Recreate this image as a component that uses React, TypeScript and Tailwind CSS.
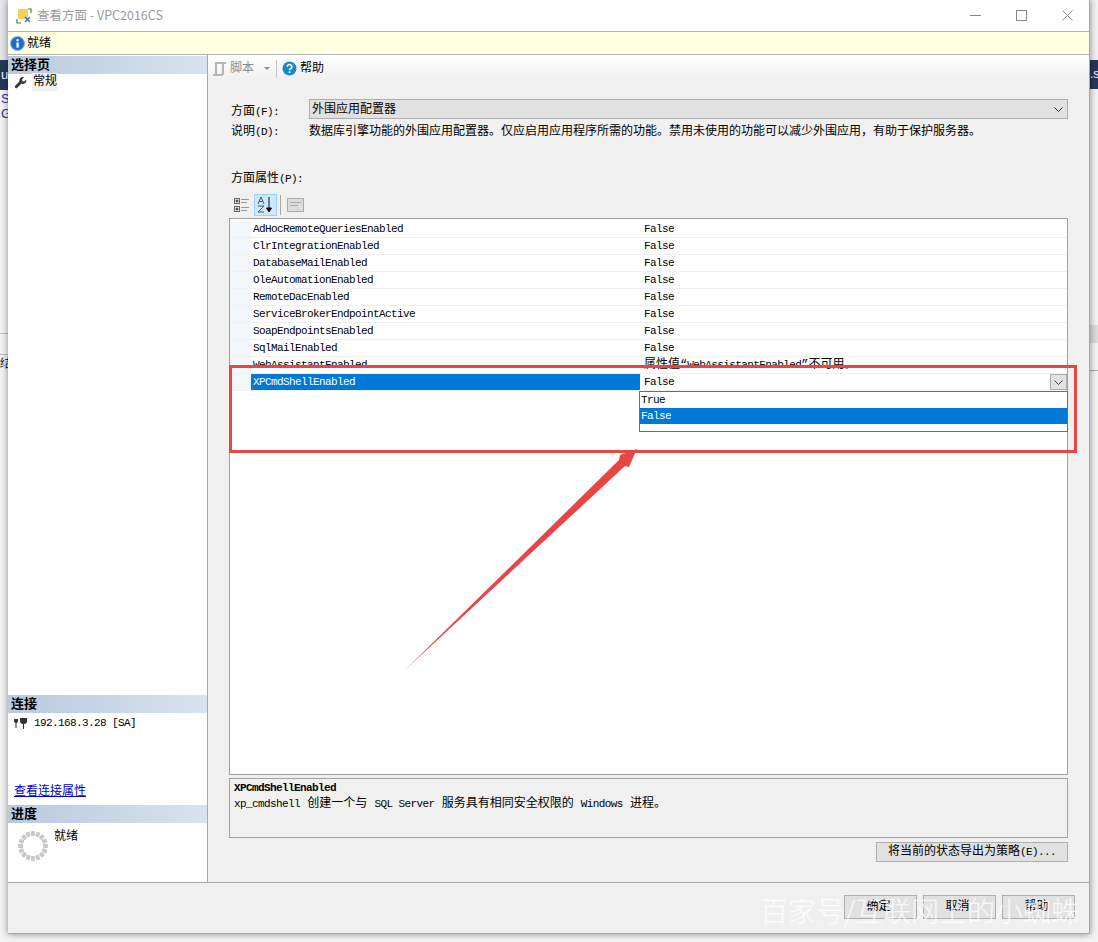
const PROPS = [
  "AdHocRemoteQueriesEnabled",
  "ClrIntegrationEnabled",
  "DatabaseMailEnabled",
  "OleAutomationEnabled",
  "RemoteDacEnabled",
  "ServiceBrokerEndpointActive",
  "SoapEndpointsEnabled",
  "SqlMailEnabled",
];

// NSimSun-ish half width latin: 6px per char
function Latin({ children }: { children: React.ReactNode }) {
  return <span className="font-['Liberation_Mono',monospace] text-[11px] tracking-[-0.6px]">{children}</span>;
}

function Row({ name, value, selected }: { name: string; value: React.ReactNode; selected?: boolean }) {
  return (
    <div className="flex h-[17px] border-b border-[#f0f0f0] leading-[16px] text-black">
      <div className="w-[21px] shrink-0 bg-[#f3f6fb]" />
      <div className={`w-[389px] shrink-0 pl-[2px] ${selected ? "bg-[#0078d7] text-white" : ""}`}>
        <Latin>{name}</Latin>
      </div>
      <div className="flex flex-1 justify-between pl-[4px]">
        <div className="whitespace-nowrap">{value}</div>
        {selected && (
          <div className="flex h-[16px] w-[17px] items-center justify-center border border-[#adadad] bg-[#e1e1e1]">
            <svg width="9" height="5" viewBox="0 0 9 5" fill="none" stroke="#444">
              <path d="M0.5 0.5 L4.5 4.5 L8.5 0.5" />
            </svg>
          </div>
        )}
      </div>
    </div>
  );
}

function PanelHeader({ children }: { children: React.ReactNode }) {
  return (
    <div className="h-[18px] bg-gradient-to-r from-[#b9cadc] to-[#d6e3f0] pl-[3px] text-[13px] font-bold leading-[19px] text-black">
      {children}
    </div>
  );
}

function FooterButton({ label }: { label: string }) {
  return (
    <button className="h-[24px] w-[73px] border border-[#adadad] bg-[#e1e1e1] pr-[4px] text-[12px] text-black">{label}</button>
  );
}

function Spinner() {
  const dots = Array.from({ length: 16 }, (_, i) => (i * 360) / 16);
  return (
    <svg width="32" height="32" viewBox="0 0 32 32">
      {dots.map((d) => (
        <rect key={d} x="14" y="1" width="4" height="5" rx="1" fill="#c9c9c9" transform={`rotate(${d} 16 16)`} />
      ))}
    </svg>
  );
}

export default function App() {
  return (
    <div className="flex h-[942px] w-[1098px] overflow-hidden bg-[#f4f4f4] font-['Liberation_Mono','Noto_Sans_CJK_SC',monospace] text-[12px]">
      {/* what shows behind the dialog on the left */}
      <div className="w-[8px] shrink-0 overflow-hidden font-['Liberation_Sans',sans-serif] text-[13px]">
        <div className="h-[60px] bg-[#e4e6ea]" />
        <div className="h-[30px] bg-[#26385a] pl-[1px] leading-[30px] text-white">u</div>
        <div className="mt-[1px] pl-[1px] leading-[15px] text-[#2b2bb0]">S</div>
        <div className="pl-[1px] leading-[15px] text-[#2b2bb0]">G</div>
        <div className="mt-[212px] h-px bg-[#bdbdbd]" />
        <div className="mt-[20px] h-px bg-[#bdbdbd]" />
        <div className="text-[12px] leading-[16px] text-black">结</div>
      </div>

      <div className="relative flex h-[934px] w-[1082px] shrink-0 flex-col border-r border-b border-[#a8a8a8] bg-[#f0f0f0] shadow-[0_0_7px_rgba(0,0,0,0.45)]">
        {/* title bar */}
        <div className="flex h-[32px] shrink-0 items-center border-b border-[#b5b5b5] bg-white pl-[8px]">
          <svg width="16" height="16" viewBox="0 0 16 16">
            <rect x="2" y="1" width="10" height="10" fill="#f5cf5a" />
            <path d="M12 1h3v4M1 11v4h4" fill="none" stroke="#3a8a3a" strokeWidth="1.2" />
            <path d="M9 9l5 5M14 9l-5 5" stroke="#2f7fd0" strokeWidth="1.6" />
          </svg>
          <span className="ml-[5px] font-['Noto_Sans_CJK_SC',sans-serif] text-[12.5px] text-[#9b9b9b]">查看方面 - VPC2016CS</span>
          <div className="ml-auto flex items-center">
            <svg width="11" height="11" viewBox="0 0 11 11" stroke="#888" fill="none">
              <path d="M0 5.5h11" />
            </svg>
            <svg className="ml-[35px]" width="11" height="11" viewBox="0 0 11 11" stroke="#888" fill="none">
              <rect x="0.5" y="0.5" width="10" height="10" />
            </svg>
            <svg className="ml-[35px] mr-[16px]" width="11" height="11" viewBox="0 0 11 11" stroke="#888" fill="none">
              <path d="M0.5 0.5l10 10M10.5 0.5l-10 10" />
            </svg>
          </div>
        </div>

        {/* status strip */}
        <div className="flex h-[23px] shrink-0 items-center border-b border-[#b0b0b0] bg-[#ffffe1] pl-[2px] text-[12px] text-black">
          <svg width="15" height="15" viewBox="0 0 15 15">
            <circle cx="7.5" cy="7.5" r="7" fill="#1f6fc4" stroke="#8fb4dc" />
            <rect x="6.5" y="6.4" width="2.2" height="5.2" fill="#fff" />
            <rect x="6.5" y="3.2" width="2.2" height="2" fill="#fff" />
          </svg>
          <span className="ml-[2px] pt-px">就绪</span>
        </div>

        <div className="flex min-h-0 flex-1">
          {/* left pane */}
          <div className="flex w-[200px] shrink-0 flex-col border-r border-[#a8a8a8] bg-white">
            <div className="pt-[1px]">
              <PanelHeader>选择页</PanelHeader>
            </div>
            <div className="flex h-[16px] items-center pl-[6px] text-[12px] text-black">
              <svg width="13" height="13" viewBox="0 0 24 24" fill="#333">
                <path d="M22.7 6.3l-4 4-3.2-.8-.8-3.2 4-4a6.5 6.5 0 0 0-8.6 8L2.3 18a2.6 2.6 0 0 0 3.7 3.7l7.700-7.800a6.500 6.500 0 0 0 9-7.600z" />
              </svg>
              <span className="ml-[5px] bg-[#f0f0f0] px-[1px]">常规</span>
            </div>

            <div className="mt-[605px]">
              <PanelHeader>连接</PanelHeader>
            </div>
            <div className="flex h-[20px] items-center pl-[5px] text-black">
              <svg width="16" height="14" viewBox="0 0 16 14" fill="#333">
                <path d="M1 3h4v2a2 2 0 0 1-1.500 2v5h-1V7A2 2 0 0 1 1 5zM7 2h7v3a3 3 0 0 1-3 3v5h-1V8A3 3 0 0 1 7 5z" />
              </svg>
              <span className="ml-[5px]">
                <Latin>192.168.3.28 [SA]</Latin>
              </span>
            </div>
            <div className="mt-[51px] pl-[6px] leading-[16px] text-[#0000d0] underline">查看连接属性</div>
            <div className="mt-[5px]">
              <PanelHeader>进度</PanelHeader>
            </div>
            <div className="flex pl-[9px] pt-[7px] text-black">
              <Spinner />
              <span className="ml-[5px] mt-[-2px] text-[12px]">就绪</span>
            </div>
          </div>

          {/* right pane */}
          <div className="flex min-w-0 flex-1 flex-col bg-[#f0f0f0]">
            <div className="flex h-[25px] shrink-0 items-center bg-gradient-to-b from-white to-[#f0f0f0] pl-[4px] pt-[2px] text-black">
              <svg width="15" height="16" viewBox="0 0 15 16" fill="#b4b4b4">
                <path d="M3 1h11v2h-2v9a3 3 0 0 1-3 3H1v-2h2zM5 3v10h4a1 1 0 0 0 1-1V3z" />
              </svg>
              <span className="ml-[3px] text-[#8a8a8a]">脚本</span>
              <span className="ml-[10px] h-0 w-0 border-x-[3px] border-t-[3px] border-x-transparent border-t-[#888]" />
              <span className="ml-[6px] h-[18px] w-px bg-[#c8c8c8]" />
              <svg className="ml-[5px]" width="15" height="15" viewBox="0 0 15 15">
                <circle cx="7.5" cy="7.500" r="7" fill="#1c87c9" />
                <path d="M5.200 5.800a2.300 2.300 0 1 1 3.400 2c-.8.4-1.100.8-1.100 1.500" fill="none" stroke="#fff" strokeWidth="1.600" />
                <rect x="6.700" y="10.400" width="1.700" height="1.700" fill="#fff" />
              </svg>
              <span className="ml-[3px]">帮助</span>
            </div>

            <div className="flex min-h-0 flex-1 flex-col pl-[21px] pr-[21px] text-black">
              <div className="mt-[19px] flex h-[20px] items-center">
                <span className="w-[80px] pl-[2px] pt-[5px]">方面<Latin>(F):</Latin></span>
                <div className="flex h-[20px] flex-1 items-center justify-between border border-[#adadad] bg-[#e1e1e1] pl-[2px] pr-[4px]">
                  <span className="pt-[2px]">外围应用配置器</span>
                  <svg width="9" height="5" viewBox="0 0 9 5" fill="none" stroke="#333">
                    <path d="M0.500 0.500 L4.500 4.500 L8.500 0.500" />
                  </svg>
                </div>
              </div>
              <div className="mt-[3px] flex leading-[18px]">
                <span className="w-[80px] pl-[2px] pt-px">说明<Latin>(D):</Latin></span>
                <span className="pt-px">数据库引擎功能的外围应用配置器。仅应启用应用程序所需的功能。禁用未使用的功能可以减少外围应用，有助于保护服务器。</span>
              </div>
              <div className="mt-[29px] pl-[2px] leading-[18px]">方面属性<Latin>(P):</Latin></div>

              <div className="mt-[6px] flex h-[22px] items-center pl-[4px]">
                <svg width="18" height="16" viewBox="0 0 18 16" fill="none" stroke="#666">
                  <rect x="1.500" y="1.500" width="5" height="5" />
                  <rect x="1.500" y="9.500" width="5" height="5" />
                  <path d="M8 2.500h8M8 5.500h6M8 10.500h8M8 13.500h6" stroke="#999" />
                  <path d="M2.500 4h3M4 2.500v3M2.500 12h3M4 10.500v3" stroke="#222" />
                </svg>
                <div className="ml-[3px] flex h-[22px] w-[23px] items-center justify-center border border-[#99d1ff] bg-[#cce8ff]">
                  <svg width="19" height="18" viewBox="0 0 19 18" fill="none">
                    <path d="M2 8l3-7 3 7M3.200 5.500h3.600M2 10h6l-6 6h6" stroke="#555" />
                    <path d="M13 1v14M10.500 12l2.500 4 2.500-4z" stroke="#111" fill="#111" />
                  </svg>
                </div>
                <span className="ml-[3px] h-[20px] w-px bg-[#a8a8a8]" />
                <svg className="ml-[6px]" width="17" height="16" viewBox="0 0 17 16" fill="#dcdcdc" stroke="#aaa">
                  <rect x="0.500" y="1.500" width="16" height="13" />
                  <path d="M3 5.500h11M3 8.500h8" />
                </svg>
              </div>

              <div className="mt-[2px] h-[557px] shrink-0 border border-[#a0a0a0] bg-white pt-[2px]">
                {PROPS.map((p) => (
                  <Row key={p} name={p} value={<Latin>False</Latin>} />
                ))}
                <Row
                  name="WebAssistantEnabled"
                  value={
                    <span>
                      属性值“<Latin>WebAssistantEnabled</Latin>”不可用。
                    </span>
                  }
                />
                <Row name="XPCmdShellEnabled" value={<Latin>False</Latin>} selected />
              </div>

              <div className="mt-[3px] h-[60px] shrink-0 border border-[#a0a0a0] px-[4px] pt-px leading-[16px]">
                <div className="font-bold">
                  <Latin>XPCmdShellEnabled</Latin>
                </div>
                <div>
                  <Latin>xp_cmdshell</Latin> 创建一个与 <Latin>SQL Server</Latin> 服务具有相同安全权限的 <Latin>Windows</Latin> 进程。
                </div>
              </div>

              <div className="mt-[4px] flex justify-end">
                <button className="h-[20px] w-[192px] border border-[#adadad] bg-[#e1e1e1] text-[12px] text-black">
                  将当前的状态导出为策略<Latin>(E)...</Latin>
                </button>
              </div>
            </div>
          </div>
        </div>

        {/* footer buttons */}
        <div className="flex h-[51px] shrink-0 justify-end gap-[6px] border-t border-[#a8a8a8] pr-[14px] pt-[12px]">
          <FooterButton label="确定" />
          <FooterButton label="取消" />
          <FooterButton label="帮助" />
        </div>

        {/* open dropdown of the value cell */}
        <div className="absolute left-[631px] top-[391px] h-[41px] w-[429px] border border-[#6d6d6d] bg-white leading-[16px] text-black">
          <div className="h-[16px] pl-[1px]">
            <Latin>True</Latin>
          </div>
          <div className="h-[16px] bg-[#0078d7] pl-[1px] text-white">
            <Latin>False</Latin>
          </div>
        </div>

        {/* red annotation */}
        <div className="absolute left-[221px] top-[365px] h-[88px] w-[848px] border-[3px] border-[#e84545]" />
        <svg className="absolute left-0 top-0" width="1082" height="934" viewBox="0 0 1082 934">
          <polygon points="397,670 611,460 612,455 629,449 621,467 617,466" fill="#e84545" />
        </svg>

        {/* watermark */}
        <div className="absolute left-[752px] top-[891px] whitespace-nowrap font-['Noto_Sans_CJK_SC',sans-serif] text-[28px] font-light leading-[38px] text-white/80">
          百家号/互联网上的小蜘蛛
        </div>
      </div>

      {/* what shows behind the dialog on the right */}
      <div className="w-[8px] shrink-0 overflow-hidden font-['Liberation_Sans',sans-serif] text-[12px]">
        <div className="h-[60px] bg-[#f2f2f2]" />
        <div className="h-[29px] bg-[#26385a] leading-[29px] text-white">.s</div>
        <div className="mt-[236px] h-[18px] bg-[#dcdcdc]" />
        <div className="mt-[27px] h-px bg-[#aaaaaa]" />
      </div>
    </div>
  );
}
